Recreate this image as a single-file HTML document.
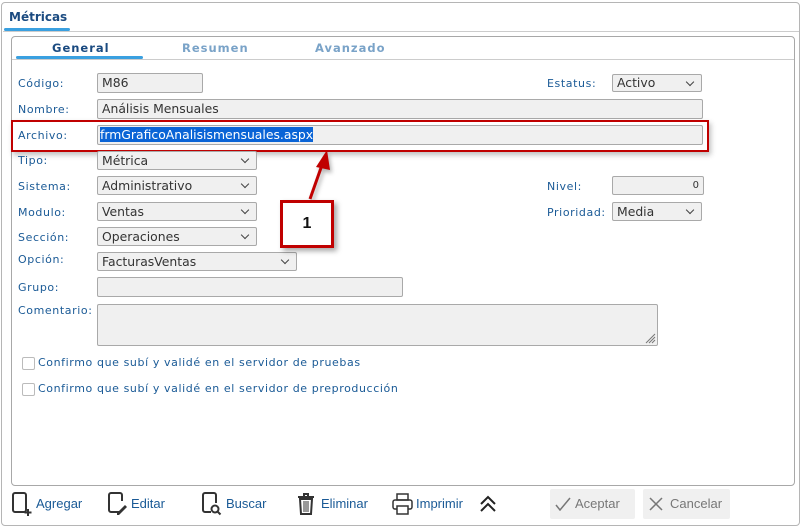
<!DOCTYPE html>
<html><head><meta charset="utf-8"><style>
*{box-sizing:border-box;margin:0;padding:0}
body{width:803px;height:528px;background:#fff;position:relative;overflow:hidden;font-family:"DejaVu Sans","Liberation Sans",sans-serif}
.a{position:absolute}
.lbl{position:absolute;font-size:11px;color:#1a5a96;letter-spacing:0.6px;white-space:nowrap}
.in{position:absolute;background:#f0f0f0;border:1px solid #a9a9a9;border-radius:2px;font-size:12.4px;color:#333;padding-left:4px;line-height:18px;white-space:nowrap;overflow:hidden}
.sel::after{content:"";position:absolute;right:8px;top:4px;width:5px;height:5px;border-right:1.3px solid #444;border-bottom:1.3px solid #444;transform:rotate(45deg)}
.cb{position:absolute;width:13px;height:13px;border:1px solid #bbb;border-radius:2px;background:#fff}
.tb{position:absolute;top:496px;font-size:13px;color:#1a5a96;font-family:"Liberation Sans",sans-serif}
</style></head><body>
<div class="a" style="left:1px;top:2px;width:799px;height:524px;border:1px solid #b5b5b5;border-radius:4px"></div>
<div class="a" style="left:9px;top:10px;font-size:12px;font-weight:bold;color:#1a4a80">Métricas</div>
<div class="a" style="left:4px;top:28px;width:66px;height:3px;background:#3aa0e0;border-radius:2px"></div>
<div class="a" style="left:3px;top:31px;width:796px;height:1px;background:#ccc"></div>
<div class="a" style="left:11px;top:36px;width:784px;height:450px;border:1px solid #a8a8a8;border-radius:4px"></div>
<div class="a" style="left:52px;top:41px;font-size:11.5px;font-weight:bold;color:#1a4a80;letter-spacing:1px">General</div>
<div class="a" style="left:182px;top:41px;font-size:11.5px;font-weight:bold;color:#7aa3c8;letter-spacing:1px">Resumen</div>
<div class="a" style="left:315px;top:41px;font-size:11.5px;font-weight:bold;color:#7aa3c8;letter-spacing:1px">Avanzado</div>
<div class="a" style="left:16px;top:56px;width:127px;height:3px;background:#3aa0e0;border-radius:2px"></div>
<div class="a" style="left:12px;top:59px;width:782px;height:1px;background:#ccc"></div>

<div class="lbl" style="left:18px;top:77px">Código:</div><div class="in" style="left:97px;top:73px;width:106px;height:20px">M86</div>
<div class="lbl" style="left:547px;top:77px">Estatus:</div><div class="in sel" style="left:612px;top:74px;width:90px;height:18px;line-height:16px">Activo</div>
<div class="lbl" style="left:18px;top:103px">Nombre:</div><div class="in" style="left:97px;top:99px;width:606px;height:20px">Análisis Mensuales</div>
<div class="a" style="left:11px;top:120px;width:698px;height:32px;border:2px solid #c00000;box-shadow:2px 3px 5px rgba(0,0,0,.25)"></div>
<div class="lbl" style="left:18px;top:129px">Archivo:</div><div class="in" style="left:97px;top:125px;width:606px;height:20px;padding-left:2px"><span style="background:#0a64d6;color:#fff">frmGraficoAnalisismensuales.aspx</span></div>
<div class="lbl" style="left:18px;top:154px">Tipo:</div><div class="in sel" style="left:97px;top:151px;width:160px;height:19px;line-height:17px">Métrica</div>
<div class="lbl" style="left:18px;top:180px">Sistema:</div><div class="in sel" style="left:97px;top:176px;width:160px;height:19px;line-height:17px">Administrativo</div>
<div class="lbl" style="left:547px;top:180px">Nivel:</div><div class="in" style="left:612px;top:176px;width:92px;height:19px;text-align:right;padding-right:4px;font-size:10px;line-height:17px">0</div>
<div class="lbl" style="left:18px;top:206px">Modulo:</div><div class="in sel" style="left:97px;top:202px;width:160px;height:19px;line-height:17px">Ventas</div>
<div class="lbl" style="left:547px;top:206px">Prioridad:</div><div class="in sel" style="left:612px;top:202px;width:90px;height:19px;line-height:17px">Media</div>
<div class="lbl" style="left:18px;top:231px">Sección:</div><div class="in sel" style="left:97px;top:227px;width:160px;height:19px;line-height:17px">Operaciones</div>
<div class="lbl" style="left:18px;top:253px">Opción:</div><div class="in sel" style="left:97px;top:252px;width:200px;height:19px;line-height:17px">FacturasVentas</div>
<div class="lbl" style="left:18px;top:281px">Grupo:</div><div class="in" style="left:97px;top:277px;width:306px;height:20px"></div>
<div class="lbl" style="left:18px;top:304px">Comentario:</div><div class="in" style="left:97px;top:304px;width:561px;height:42px"></div>
<svg class="a" style="left:645px;top:333px" width="11" height="11"><path d="M1 10L10 1M4 10L10 4M7 10L10 7" stroke="#777" stroke-width="1"/></svg>
<div class="cb" style="left:22px;top:357px"></div><div class="lbl" style="left:38px;top:356px">Confirmo que subí y validé en el servidor de pruebas</div>
<div class="cb" style="left:22px;top:383px"></div><div class="lbl" style="left:38px;top:382px">Confirmo que subí y validé en el servidor de preproducción</div>

<svg class="a" style="left:0;top:0" width="803" height="528"><g style="filter:drop-shadow(2px 3px 2px rgba(0,0,0,.3))"><line x1="310" y1="199" x2="322" y2="165" stroke="#c00000" stroke-width="3"/><polygon points="327,150 316,167 330,170" fill="#c00000"/></g></svg>
<div class="a" style="left:280px;top:200px;width:54px;height:48px;border:3px solid #c00000;background:#fff;box-shadow:3px 3px 5px rgba(0,0,0,.35);text-align:center;line-height:42px;font-weight:bold;font-size:16px;font-family:'Liberation Sans',sans-serif;color:#111">1</div>

<svg class="a" style="left:12px;top:492px" width="22" height="24"><rect x="1" y="1" width="13" height="19" rx="2" fill="none" stroke="#333" stroke-width="2"/><path d="M16 17v7M12.5 20.5h7" stroke="#333" stroke-width="2"/></svg><div class="tb" style="left:36px">Agregar</div>
<svg class="a" style="left:108px;top:492px" width="22" height="24"><path d="M12 20H3a2 2 0 0 1-2-2V3a2 2 0 0 1 2-2h9a2 2 0 0 1 2 2v6" fill="none" stroke="#333" stroke-width="2"/><path d="M9 21l8-8 2 2-8 8h-2z" fill="#333"/></svg><div class="tb" style="left:131px">Editar</div>
<svg class="a" style="left:202px;top:492px" width="22" height="24"><path d="M9 20H3a2 2 0 0 1-2-2V3a2 2 0 0 1 2-2h9a2 2 0 0 1 2 2v8" fill="none" stroke="#333" stroke-width="2"/><circle cx="13" cy="17" r="3.5" fill="none" stroke="#333" stroke-width="2"/><path d="M15.5 19.5l3 3" stroke="#333" stroke-width="2"/></svg><div class="tb" style="left:226px">Buscar</div>
<svg class="a" style="left:297px;top:492px" width="20" height="24"><path d="M1 5h16M7 5V2h4v3" fill="none" stroke="#333" stroke-width="2"/><path d="M3 7h12l-1 15H4z" fill="none" stroke="#333" stroke-width="2"/><path d="M7 9v11M9 9v11M11 9v11" stroke="#333"/></svg><div class="tb" style="left:321px">Eliminar</div>
<svg class="a" style="left:392px;top:492px" width="22" height="24"><rect x="5" y="2" width="11" height="6" fill="none" stroke="#333" stroke-width="1.5"/><rect x="1" y="8" width="19" height="9" rx="2" fill="none" stroke="#333" stroke-width="1.5"/><rect x="5" y="14" width="11" height="8" fill="#fff" stroke="#333" stroke-width="1.5"/></svg><div class="tb" style="left:416px">Imprimir</div>
<svg class="a" style="left:478px;top:495px" width="20" height="18"><path d="M3 9l7-7 7 7M3 16l7-7 7 7" fill="none" stroke="#222" stroke-width="2"/></svg>
<div class="a" style="left:550px;top:489px;width:85px;height:30px;background:#f0f0f0;border-radius:2px"></div>
<svg class="a" style="left:555px;top:497px" width="16" height="14"><path d="M1 8l4 5L15 1" fill="none" stroke="#777" stroke-width="1.5"/></svg><div class="tb" style="left:575px;color:#777">Aceptar</div>
<div class="a" style="left:643px;top:489px;width:87px;height:30px;background:#f0f0f0;border-radius:2px"></div>
<svg class="a" style="left:648px;top:496px" width="16" height="16"><path d="M2 2l12 12M14 2L2 14" stroke="#777" stroke-width="1.5"/></svg><div class="tb" style="left:670px;color:#777">Cancelar</div>
</body></html>
